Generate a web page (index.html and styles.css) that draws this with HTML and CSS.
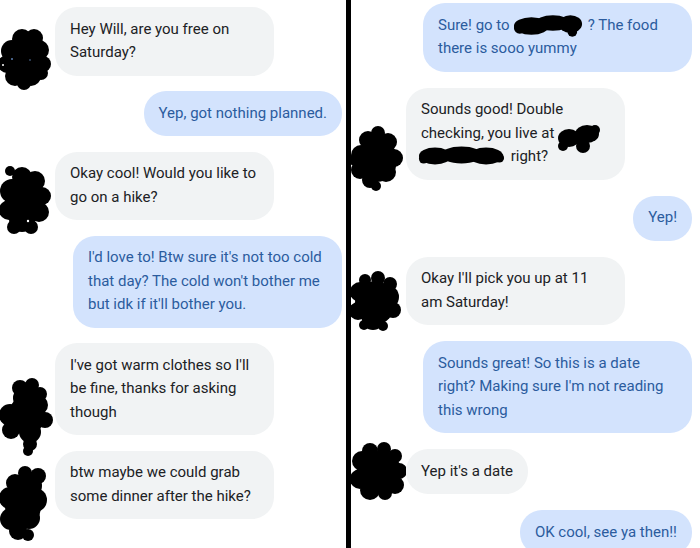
FILE: index.html
```html
<!DOCTYPE html>
<html>
<head>
<meta charset="utf-8">
<link rel="stylesheet" href="styles.css">
</head>
<body>
<div class="screen">
  <section class="panel panel-left">
    <div class="row in">
      <svg class="avatar" viewBox="0 13 55 90" width="55" height="90">
        <g fill="#000"><ellipse cx="25" cy="56" rx="19" ry="22"/><circle cx="22" cy="36" r="10"/><circle cx="34" cy="35" r="9"/><circle cx="12" cy="48" r="11"/><circle cx="39" cy="47" r="10"/><circle cx="7" cy="61" r="9"/><circle cx="43" cy="61" r="8"/><circle cx="15" cy="73" r="10"/><circle cx="31" cy="73" r="10"/><circle cx="41" cy="70" r="7"/><circle cx="24" cy="80" r="7"/></g>
        <circle cx="12" cy="56" r="1" fill="#5d7fb0"/><circle cx="30" cy="57" r="0.8" fill="#5d7fb0"/><circle cx="3" cy="62" r="1" fill="#fff"/>
      </svg>
      <div class="bubble recv wide">Hey Will, are you free on<br>Saturday?</div>
    </div>
    <div class="row out">
      <div class="bubble sent">Yep, got nothing planned.</div>
    </div>
    <div class="row in">
      <svg class="avatar" viewBox="0 160 55 90" width="55" height="90">
        <g fill="#000"><ellipse cx="25" cy="200" rx="20" ry="24"/><circle cx="10" cy="171" r="5"/><circle cx="22" cy="177" r="10"/><circle cx="35" cy="181" r="10"/><circle cx="12" cy="191" r="12"/><circle cx="42" cy="196" r="9"/><circle cx="9" cy="210" r="10"/><circle cx="39" cy="212" r="10"/><circle cx="22" cy="219" r="13"/><circle cx="14" cy="227" r="7"/><circle cx="31" cy="227" r="7"/></g>
        <circle cx="28" cy="221" r="1.2" fill="#fff"/>
      </svg>
      <div class="bubble recv wide">Okay cool! Would you like to<br>go on a hike?</div>
    </div>
    <div class="row out">
      <div class="bubble sent wide">I'd love to! Btw sure it's not too cold<br>that day? The cold won't bother me<br>but idk if it'll bother you.</div>
    </div>
    <div class="row in">
      <svg class="avatar" viewBox="0 375 55 90" width="55" height="90">
        <g fill="#000"><ellipse cx="27" cy="415" rx="18" ry="20"/><circle cx="20" cy="388" r="8"/><circle cx="32" cy="385" r="7"/><circle cx="40" cy="394" r="7"/><circle cx="25" cy="398" r="12"/><circle cx="38" cy="405" r="10"/><circle cx="10" cy="415" r="11"/><circle cx="45" cy="420" r="8"/><circle cx="11" cy="430" r="9"/><circle cx="30" cy="432" r="11"/><circle cx="30" cy="444" r="7"/><circle cx="28" cy="451" r="5"/></g>
      </svg>
      <div class="bubble recv wide">I've got warm clothes so I'll<br>be fine, thanks for asking<br>though</div>
    </div>
    <div class="row in">
      <svg class="avatar" viewBox="0 459 55 90" width="55" height="90">
        <g fill="#000"><ellipse cx="23" cy="505" rx="18" ry="24"/><circle cx="25" cy="473" r="7"/><circle cx="38" cy="476" r="8"/><circle cx="15" cy="483" r="9"/><circle cx="30" cy="486" r="12"/><circle cx="10" cy="498" r="11"/><circle cx="35" cy="500" r="12"/><circle cx="11" cy="519" r="11"/><circle cx="29" cy="518" r="11"/><circle cx="18" cy="531" r="9"/><circle cx="28" cy="535" r="6"/></g>
      </svg>
      <div class="bubble recv wide">btw maybe we could grab<br>some dinner after the hike?</div>
    </div>
  </section>
  <div class="divider"></div>
  <section class="panel panel-right">
    <div class="row out">
      <div class="bubble sent wide">Sure! go to<span class="redact r1"><svg viewBox="0 0 74 26" width="72" height="26"><g fill="#000"><ellipse cx="20" cy="14" rx="18" ry="9"/><ellipse cx="42" cy="11" rx="18" ry="8"/><ellipse cx="60" cy="12" rx="12" ry="9"/><circle cx="8" cy="16" r="6"/><circle cx="62" cy="20" r="5"/></g></svg></span>? The food<br>there is sooo yummy</div>
    </div>
    <div class="row in">
      <svg class="avatar" viewBox="351 120 55 90" width="55" height="90">
        <g fill="#000"><ellipse cx="377" cy="160" rx="20" ry="22"/><circle cx="378" cy="133" r="7"/><circle cx="368" cy="140" r="9"/><circle cx="388" cy="142" r="9"/><circle cx="361" cy="155" r="10"/><circle cx="394" cy="158" r="9"/><circle cx="360" cy="170" r="9"/><circle cx="386" cy="172" r="10"/><circle cx="370" cy="180" r="8"/><circle cx="376" cy="186" r="5"/><circle cx="355" cy="160" r="6"/></g>
      </svg>
      <div class="bubble recv wide">Sounds good! Double<br>checking, you live at<span class="redact r2"><svg viewBox="0 0 46 34" width="46" height="34"><g fill="#000"><ellipse cx="14" cy="16" rx="11" ry="9"/><ellipse cx="32" cy="12" rx="12" ry="9"/><circle cx="28" cy="24" r="7"/><circle cx="40" cy="8" r="5"/><circle cx="8" cy="24" r="5"/></g></svg></span><br><span class="redact r3"><svg viewBox="0 0 92 24" width="87" height="24"><g fill="#000"><ellipse cx="18" cy="12" rx="17" ry="9"/><ellipse cx="46" cy="11" rx="22" ry="9"/><ellipse cx="72" cy="12" rx="18" ry="9"/><circle cx="6" cy="15" r="5"/><circle cx="86" cy="14" r="5"/></g></svg></span> right?</div>
    </div>
    <div class="row out">
      <div class="bubble sent">Yep!</div>
    </div>
    <div class="row in">
      <svg class="avatar" viewBox="351 264 55 90" width="55" height="90">
        <g fill="#000"><ellipse cx="375" cy="302" rx="20" ry="22"/><circle cx="365" cy="279" r="6"/><circle cx="378" cy="277" r="7"/><circle cx="390" cy="283" r="7"/><circle cx="360" cy="291" r="10"/><circle cx="387" cy="296" r="12"/><circle cx="358" cy="310" r="9"/><circle cx="393" cy="309" r="8"/><circle cx="373" cy="318" r="11"/><circle cx="383" cy="325" r="5"/><circle cx="364" cy="324" r="5"/></g>
      </svg>
      <div class="bubble recv wide">Okay I'll pick you up at 11<br>am Saturday!</div>
    </div>
    <div class="row out">
      <div class="bubble sent wide">Sounds great! So this is a date<br>right? Making sure I'm not reading<br>this wrong</div>
    </div>
    <div class="row in">
      <svg class="avatar" viewBox="351 434 55 90" width="55" height="90">
        <g fill="#000"><ellipse cx="379" cy="471" rx="22" ry="20"/><circle cx="370" cy="451" r="8"/><circle cx="384" cy="449" r="7"/><circle cx="395" cy="456" r="7"/><circle cx="362" cy="461" r="10"/><circle cx="399" cy="471" r="8"/><circle cx="360" cy="479" r="10"/><circle cx="395" cy="485" r="9"/><circle cx="370" cy="490" r="10"/><circle cx="385" cy="493" r="7"/></g>
      </svg>
      <div class="bubble recv">Yep it's a date</div>
    </div>
    <div class="row out">
      <div class="bubble sent">OK cool, see ya then!!</div>
    </div>
  </section>
</div>
</body>
</html>
```

FILE: styles.css
```css
html, body {
  margin: 0;
  padding: 0;
  background: #fff;
}
body {
  width: 700px;
  height: 548px;
  overflow: hidden;
  font-family: Roboto, "Noto Sans", "Liberation Sans", sans-serif;
  font-size: 15px;
}
.screen {
  display: flex;
  height: 548px;
}
.panel {
  display: flex;
  flex-direction: column;
  overflow: hidden;
}
.panel-left {
  width: 346px;
  padding: 7px 4px 0 0;
  box-sizing: border-box;
  gap: 15.5px;
}
.panel-right {
  width: 349px;
  padding: 3px 8px 0 0;
  box-sizing: border-box;
  gap: 16px;
}
.divider {
  width: 5px;
  background: #000;
  flex: none;
}
.row {
  display: flex;
  align-items: flex-end;
  flex: none;
}
.row.out {
  justify-content: flex-end;
}
.avatar {
  flex: none;
  display: block;
  margin-top: -60px;
  margin-bottom: -30px;
}
.bubble {
  box-sizing: border-box;
  padding: 10.75px 15px;
  line-height: 23.5px;
  border-radius: 22px;
  white-space: nowrap;
}
.recv {
  background: #f1f3f4;
  color: #202124;
}
.sent {
  background: #d3e3fd;
  color: #2b5c9e;
}
.recv.wide {
  width: 219px;
}
.sent.wide {
  width: 269px;
}
.redact {
  display: inline-block;
  position: relative;
  height: 0;
  vertical-align: middle;
}
.redact svg {
  position: absolute;
  left: 0;
  display: block;
}
.r1 {
  width: 76px;
  margin-left: 2px;
}
.r1 svg {
  top: -14px;
}
.r2 {
  width: 46px;
  margin-left: 1px;
}
.r2 svg {
  top: -12px;
}
.r3 {
  width: 89px;
  margin-left: -3px;
}
.r3 svg {
  top: -13px;
}
```
